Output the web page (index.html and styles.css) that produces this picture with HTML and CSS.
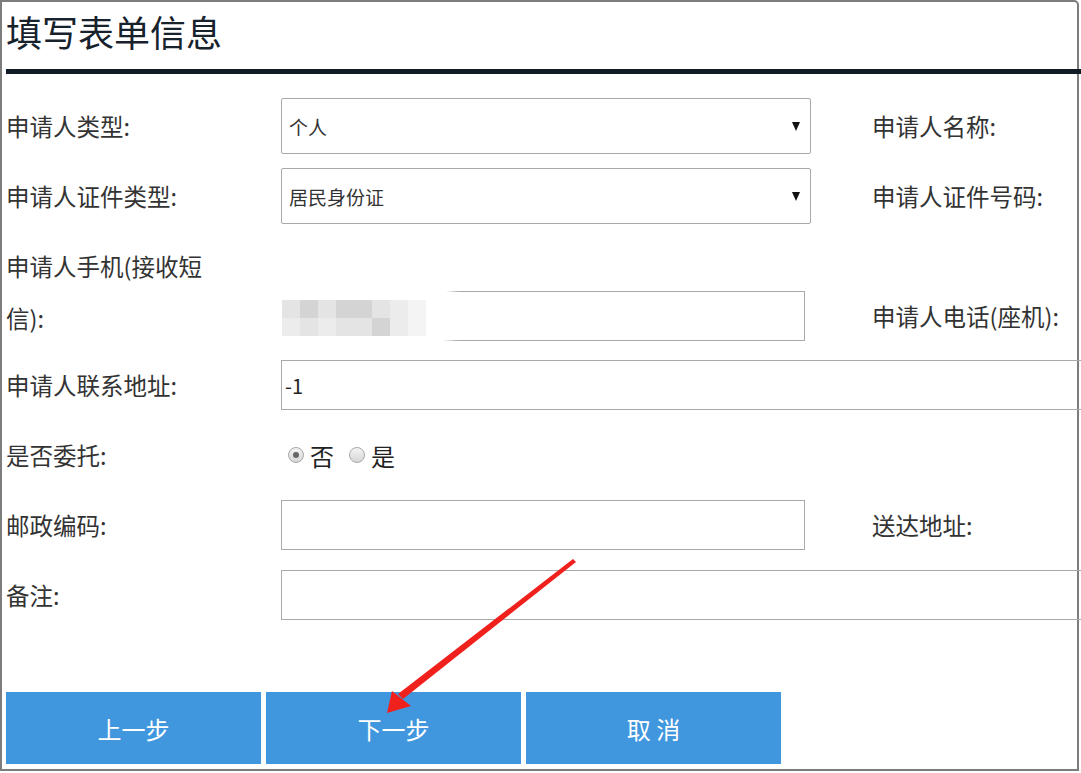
FILE: index.html
```html
<!DOCTYPE html>
<html lang="zh-CN">
<head>
<meta charset="utf-8">
<title>填写表单信息</title>
<link rel="stylesheet" href="styles.css">
</head>
<body>
<div class="frame">
  <h1 class="title">填写表单信息</h1>
  <div class="bar"></div>
  <div class="form">
    <div class="row">
      <div class="label">申请人类型:</div>
      <div class="field"><div class="select"><span>个人</span><span class="caret"></span></div></div>
      <div class="rlabel">申请人名称:</div>
    </div>
    <div class="row">
      <div class="label">申请人证件类型:</div>
      <div class="field"><div class="select"><span>居民身份证</span><span class="caret"></span></div></div>
      <div class="rlabel">申请人证件号码:</div>
    </div>
    <div class="row row-tall">
      <div class="label label-wrap">申请人手机(接收短信):</div>
      <div class="field field-end">
        <div class="input"></div>
        <div class="mosaic">
          <i class="c1"></i><i class="c2"></i><i class="c1"></i><i class="c2"></i><i class="c2"></i><i class="c1"></i><i class="c3"></i><i class="c4"></i>
          <i class="c3"></i><i class="c1"></i><i class="c3"></i><i class="c1"></i><i class="c1"></i><i class="c2"></i><i class="c3"></i><i class="c4"></i>
        </div>
      </div>
      <div class="rlabel rlabel-end">申请人电话(座机):</div>
    </div>
    <div class="row">
      <div class="label">申请人联系地址:</div>
      <div class="field"><div class="input input-wide">-1</div></div>
    </div>
    <div class="row">
      <div class="label">是否委托:</div>
      <div class="field">
        <div class="radios">
          <span class="radio checked"></span><span class="rtext">否</span>
          <span class="radio"></span><span class="rtext">是</span>
        </div>
      </div>
    </div>
    <div class="row">
      <div class="label">邮政编码:</div>
      <div class="field"><div class="input"></div></div>
      <div class="rlabel">送达地址:</div>
    </div>
    <div class="row">
      <div class="label">备注:</div>
      <div class="field"><div class="input input-wide"></div></div>
    </div>
  </div>
  <div class="buttons">
    <div class="btn">上一步</div>
    <div class="btn">下一步</div>
    <div class="btn">取 消</div>
  </div>
  <svg class="arrow" width="1081" height="773" viewBox="0 0 1081 773">
    <polygon points="573,559 576,562 403,699 398,694" fill="#f0201c"/>
    <polygon points="387,713 392,691 411,706" fill="#f0201c"/>
  </svg>
</div>
</body>
</html>
```

FILE: styles.css
```css
* { box-sizing: border-box; }
html, body { margin: 0; padding: 0; background: #fff; overflow: hidden; }
body {
  font-family: "Noto Sans CJK SC", "Noto Sans", sans-serif;
  color: #333;
  width: 1081px;
  height: 773px;
}
.frame {
  position: relative;
  width: 1079px;
  height: 771px;
  border: 2px solid #7d7d7d;
  border-top-right-radius: 5px;
}
.title {
  margin: 0;
  padding: 6px 0 0 4px;
  height: 67px;
  font-size: 36px;
  line-height: 46px;
  font-weight: 400;
  color: #17222d;
}
.bar {
  margin-left: 4px;
  width: 1077px;
  height: 5px;
  background: #111b25;
}
.form { padding-top: 17px; }
.row {
  display: flex;
  align-items: center;
  height: 70px;
}
.row-tall { height: 119px; align-items: stretch; }
.label {
  width: 279px;
  padding-left: 4px;
  font-size: 23.5px;
  color: #333;
  white-space: nowrap;
}
.label-wrap {
  white-space: normal;
  width: 220px;
  margin-right: 59px;
  line-height: 52px;
  padding-top: 9px;
}
.field {
  position: relative;
  width: 591px;
  display: flex;
  align-items: center;
}
.field-end { align-items: flex-end; padding-bottom: 9px; }
.rlabel { font-size: 23.5px; color: #333; white-space: nowrap; }
.rlabel-end { align-self: flex-end; padding-bottom: 17px; }
.select {
  width: 530px;
  height: 56px;
  border: 1px solid #a9a9a9;
  border-radius: 2px;
  display: flex;
  align-items: center;
  justify-content: space-between;
  padding: 0 10px 0 7px;
  font-size: 19px;
  color: #333;
}
.caret {
  width: 0;
  height: 0;
  border-left: 4.5px solid transparent;
  border-right: 4.5px solid transparent;
  border-top: 9px solid #111;
}
.input {
  width: 524px;
  height: 50px;
  border: 1px solid #a9a9a9;
  display: flex;
  align-items: center;
  padding-left: 3px;
  font-size: 20px;
  color: #222;
}
.input-wide { width: 810px; flex-shrink: 0; }
.mosaic {
  position: absolute;
  left: -16px;
  top: 52px;
  width: 185px;
  height: 62px;
  background: #fff;
  border-radius: 20px;
  padding: 17px 0 0 17px;
  display: grid;
  grid-template-columns: repeat(8, 18px);
  grid-auto-rows: 18px;
  box-shadow: 0 0 8px 6px #fff;
}
.mosaic i { display: block; }
.mosaic .c1 { background: #e4e4e4; }
.mosaic .c2 { background: #d4d4d4; }
.mosaic .c3 { background: #ececec; }
.mosaic .c4 { background: #f4f4f4; }
.radios {
  display: flex;
  align-items: center;
  padding-left: 7px;
  font-size: 24px;
  color: #222;
}
.radio {
  width: 16px;
  height: 16px;
  border-radius: 50%;
  border: 1px solid #a8a8a8;
  background: linear-gradient(#f4f4f4, #d6d6d6);
  position: relative;
}
.radio.checked::after {
  content: "";
  position: absolute;
  left: 4px;
  top: 4px;
  width: 6px;
  height: 6px;
  border-radius: 50%;
  background: #666;
}
.rtext { margin: 0 15px 0 6px; }
.buttons {
  display: flex;
  gap: 5px;
  padding-left: 4px;
  margin-top: 62px;
}
.btn {
  width: 255px;
  height: 72px;
  background: #4197de;
  color: #fff;
  font-size: 24px;
  display: flex;
  align-items: center;
  justify-content: center;
}
.arrow {
  position: absolute;
  left: -2px;
  top: -2px;
  pointer-events: none;
}
```
